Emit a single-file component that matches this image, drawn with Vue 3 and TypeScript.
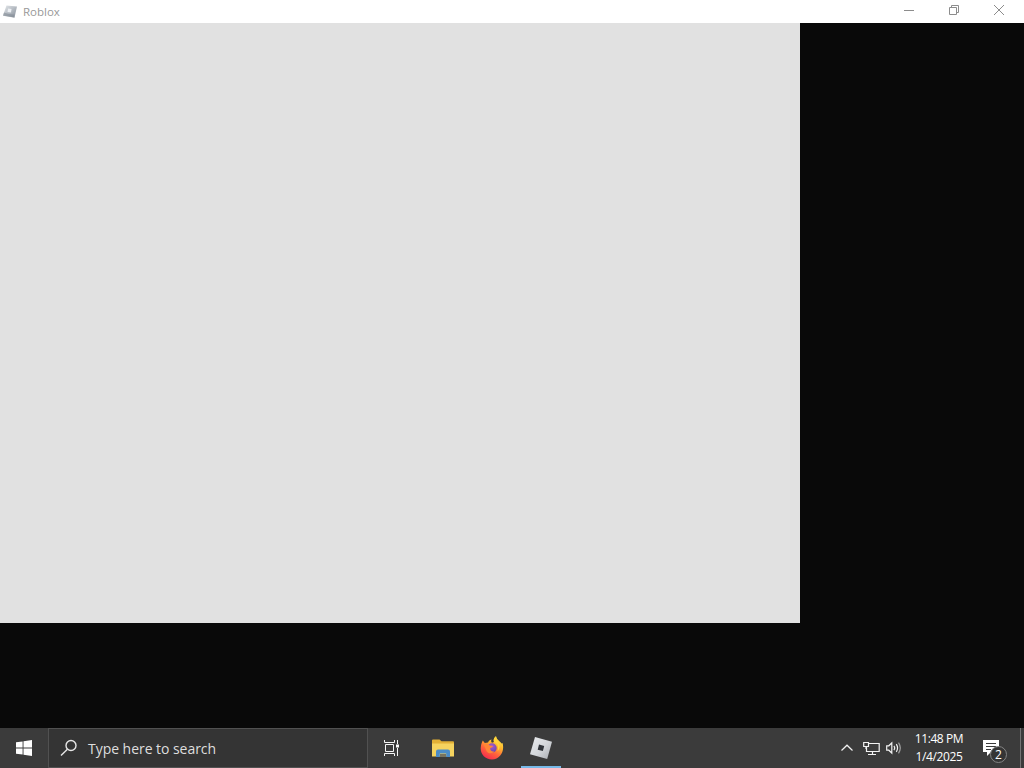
<script setup lang="ts">
import { ref } from 'vue'

const appName = ref('Roblox')
const searchHint = ref('Type here to search')
const time = ref('11:48 PM')
const date = ref('1/4/2025')
const notifications = ref(2)
</script>

<template>
  <div class="desktop">
    <header class="titlebar">
      <svg class="app-icon" width="16" height="16" viewBox="0 0 16 16">
        <defs>
          <linearGradient id="tile-small" x1="0" y1="0" x2="1" y2="1">
            <stop offset="0" stop-color="#e8ebee" />
            <stop offset="0.5" stop-color="#b6bcc3" />
            <stop offset="1" stop-color="#858d98" />
          </linearGradient>
        </defs>
        <path d="M4.500 1.500 15 2.500 12.500 13.500 1 11.500Z" fill="url(#tile-small)" />
        <path d="M2 8.500 7 10 12 10.500 12.500 13.700 1 11.800Z" fill="#858d98" opacity=".6" />
        <path d="M6 4.500 9.500 5 9 8.500 5.500 8Z" fill="#edf0f4" />
      </svg>
      <span class="title">{{ appName }}</span>
      <div class="controls">
        <div class="control">
          <svg width="12" height="12" viewBox="0 0 12 12"><path d="M1 6.500H11" /></svg>
        </div>
        <div class="control">
          <svg width="12" height="12" viewBox="0 0 12 12">
            <path d="M1.500 3.500H8.500V10.500H1.500ZM3.500 3.500V1.500H10.500V8.500H8.500" />
          </svg>
        </div>
        <div class="control">
          <svg width="12" height="12" viewBox="0 0 12 12"><path d="M1 1 11 11M11 1 1 11" /></svg>
        </div>
      </div>
    </header>

    <main class="client"><div class="canvas"></div></main>

    <footer class="taskbar">
      <div class="start">
        <svg width="16" height="16" viewBox="0 0 16 16" fill="#fff">
          <path d="M0 2.300 6.600 1.400V7.500H0ZM7.500 1.250 16 0V7.500H7.500ZM0 8.400H6.600V14.600L0 13.700ZM7.500 8.400H16V16L7.500 14.800Z" />
        </svg>
      </div>
      <div class="search">
        <svg width="18" height="18" viewBox="0 0 18 18" fill="none" stroke="#e6e6e6" stroke-width="1.400">
          <circle cx="11" cy="6.500" r="5" />
          <path d="M7.400 10.200 1 16.600" />
        </svg>
        <span>{{ searchHint }}</span>
      </div>
      <div class="tasks">
        <div class="task view">
          <svg width="16" height="16" viewBox="0 0 16 16" fill="none" stroke="#f4f4f4" stroke-width="1">
            <path d="M.5 0V2.500H10.500V0M.5 16V13.500H10.500V16M1.500 4.500H9.500V11.500H1.500ZM13.500 0V4M13.500 8V16" />
            <path d="M12 4.500H15V7.500H12Z" fill="#fff" stroke="none" />
          </svg>
        </div>
        <div class="task">
          <svg width="22" height="19" viewBox="0 0 22 19">
            <path d="M0 1.500Q0 .5 1 .5H7.500L9.500 2.200H21Q22 2.200 22 3.200V17H0Z" fill="#e2b036" />
            <path d="M0 4.500H22V17.500H0Z" fill="#f5d35f" />
            <path d="M4 18V12.500Q4 10.500 6 10.500H16Q18 10.500 18 12.500V18H14.200V14.500H7.800V18Z" fill="#4b8cc8" />
            <path d="M8 15H14V18H8Z" fill="#797460" />
          </svg>
        </div>
        <div class="task">
          <svg width="24" height="24" viewBox="0 0 24 24">
            <defs>
              <linearGradient id="flame" x1=".8" y1="0" x2=".25" y2="1">
                <stop offset="0" stop-color="#fff04f" />
                <stop offset=".35" stop-color="#ffb52d" />
                <stop offset=".65" stop-color="#ff623c" />
                <stop offset="1" stop-color="#f5264f" />
              </linearGradient>
              <radialGradient id="globe" cx=".5" cy=".3" r=".75">
                <stop offset="0" stop-color="#a65bcc" />
                <stop offset="1" stop-color="#6243ad" />
              </radialGradient>
            </defs>
            <path d="M2.800 4.500 4.800 7 8 6.500C9 4.500 10.500 3.700 11.600 3.600 10.900 4.600 11 6 12 6.700L14 6C13 3.500 14.500 1.500 16 .3 16.300 3.500 20 5 21.500 7.500L22.500 7C25 15 20 23.500 12 23.500 4.500 23.500-.3 17.500.9 10.500 1.100 8 2 6 2.800 4.500Z" fill="url(#flame)" />
            <circle cx="12" cy="12" r="4.700" fill="url(#globe)" />
            <path d="M3.500 8C6.500 7 8.500 8.500 10 9.500L13 10C12.500 11.500 10.700 11.500 10.200 12.300 10 14.700 12 16 14.700 15.300 13 18 8 18 6.500 15Z" fill="#ff8536" />
            <path d="M14 6C17.500 7 19 10.500 17.500 15 20 13 20.500 9 18 6.500L16 .3C14.500 1.500 13 3.500 14 6Z" fill="#ffd43a" />
          </svg>
        </div>
        <div class="task active">
          <svg width="22" height="22" viewBox="0 0 22 22">
            <defs>
              <linearGradient id="tile" x1="0" y1="0" x2="1" y2="1">
                <stop offset="0" stop-color="#e9ebee" />
                <stop offset=".55" stop-color="#d2d5d9" />
                <stop offset="1" stop-color="#a6a9af" />
              </linearGradient>
            </defs>
            <path d="M5 0 22 4.700 17.200 22 0 17.200Z" fill="url(#tile)" />
            <path d="M9 7.500 14.200 8.900 12.900 14.100 7.700 12.700Z" fill="#30343a" />
          </svg>
        </div>
      </div>
      <div class="tray">
        <svg class="chevron" width="14" height="8" viewBox="0 0 14 8"><path d="M1.500 6.500 7 1.200 12.500 6.500" /></svg>
        <svg class="network" width="17" height="15" viewBox="0 0 17 15">
          <path d="M5.500 2.500H16.200V10.500H3.500V6M5 13.500H13M9.500 10.500V13.500M.7 1.500H5.500V5.500H.7ZM3 5.500V8" />
        </svg>
        <svg class="volume" width="17" height="14" viewBox="0 0 17 14">
          <path d="M.7 4.800H2.800L5.800 2V12L2.800 9.200H.7ZM8 4.900Q9.500 7 8 9.100M10.300 3.200Q12.800 7 10.300 10.800" />
          <path d="M12.500 1.700Q16.100 7 12.500 12.300" opacity=".55" />
        </svg>
        <div class="clock">
          <span class="time">{{ time }}</span>
          <span class="date">{{ date }}</span>
        </div>
        <div class="action">
          <svg width="16" height="16" viewBox="0 0 16 16">
            <path d="M0 0H16V12H8L4 16V12H0Z" fill="#fff" />
            <path d="M3 3.500H13M3 6.500H13M3 9.500H8" stroke="#3b3b3b" stroke-width="1" />
          </svg>
          <span class="badge">{{ notifications }}</span>
        </div>
        <div class="peek"></div>
      </div>
    </footer>
  </div>
</template>

<style>
body { margin: 0; overflow: hidden; background: #090909; }
</style>

<style scoped>
.desktop {
  width: 1024px;
  height: 768px;
  display: flex;
  flex-direction: column;
  overflow: hidden;
  background: #090909;
  font-family: "Open Sans", "Noto Sans", sans-serif;
}
svg { display: block; flex: none; }
.titlebar {
  height: 23px;
  flex: none;
  display: flex;
  background: #fff;
  box-sizing: border-box;
}
.app-icon { margin: 4px 4px 0 2px; }
.title {
  margin-left: 1px;
  font-size: 11.5px;
  line-height: 23px;
  color: #999;
}
.controls { display: flex; margin-left: auto; height: 20px; padding-right: 3px; }
.control { width: 45px; display: flex; align-items: center; justify-content: center; }
.control svg { fill: none; stroke: #8c8c8c; stroke-width: 1; }
.client { flex: 1; min-height: 0; }
.canvas { width: 800px; height: 600px; background: #e1e1e1; }
.taskbar { height: 40px; flex: none; display: flex; background: #3b3b3b; }
.start { width: 48px; display: flex; align-items: center; justify-content: center; }
.search {
  width: 320px;
  box-sizing: border-box;
  border: 1px solid #515151;
  background: #343434;
  display: flex;
  align-items: center;
  padding-left: 11px;
  color: #dedede;
  font-size: 14px;
  white-space: nowrap;
}
.search span { margin-left: 10px; letter-spacing: -0.04px; line-height: 20px; padding-top: 1px; }
.tasks { display: flex; padding-left: 1px; }
.task { width: 49px; display: flex; align-items: center; justify-content: center; box-sizing: border-box; }
.task.view { padding-right: 3px; }
.task.active { width: 40px; margin-left: 5px; border-bottom: 2px solid #77b9e8; padding-top: 2px; }
.tray { margin-left: auto; display: flex; align-items: center; color: #fff; }
.tray > svg { fill: none; stroke: #f2f2f2; stroke-width: 1.200; }
.chevron { margin-right: 9px; }
.network { margin-right: 6px; }
.clock {
  width: 72px;
  display: flex;
  flex-direction: column;
  align-items: center;
  font-size: 12px;
  line-height: 18px;
  white-space: nowrap;
}
.time { letter-spacing: -0.4px; }
.date { letter-spacing: -0.4px; }
.action { position: relative; width: 45px; height: 40px; box-sizing: border-box; padding: 12px 0 0 8px; }
.badge {
  position: absolute;
  left: 15px;
  top: 18px;
  width: 17px;
  height: 17px;
  box-sizing: border-box;
  border: 1px solid #858585;
  border-radius: 50%;
  background: #353535;
  font-size: 12px;
  line-height: 15px;
  text-align: center;
}
.peek { width: 4px; height: 40px; box-sizing: border-box; border-left: 1px solid #737373; }
</style>
